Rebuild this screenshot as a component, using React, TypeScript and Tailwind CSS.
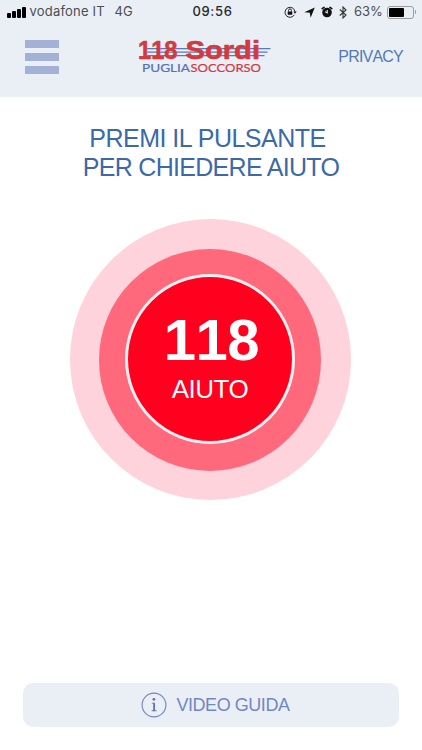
import { ReactNode } from 'react'

const SIGNAL_BARS = ['h-[5px]', 'h-[7px]', 'h-[9px]', 'h-[11px]']

function StatusBar() {
  return (
    <div className="flex h-6 items-center font-['Inter',sans-serif] text-[13px] text-[#4b4e54]">
      {/* carrier */}
      <div className="flex w-[141px] items-center pl-[7px]">
        <div className="flex h-[11px] items-end gap-[1.5px]">
          {SIGNAL_BARS.map((height) => (
            <span key={height} className={`w-[3.5px] rounded-[1px] bg-black ${height}`} />
          ))}
        </div>
        <span className="ml-1 w-[85px] whitespace-nowrap tracking-[0.2px]">vodafone IT</span>
        <span>4G</span>
      </div>

      <div className="flex-1 pl-[3px] text-center text-[13px] font-medium tracking-[0.7px] text-[#25272b]">09:56</div>

      {/* device state */}
      <div className="flex w-[141px] items-center justify-end pr-[6px]">
        <RotationLockIcon />
        <svg className="ml-[7px] h-[11px] w-[11px]" viewBox="0 0 11 11">
          <path d="M10.8 .4L6.6 10.8L5.8 5.8L.3 5.2Z" fill="#111" />
        </svg>
        <AlarmIcon />
        <svg className="ml-[6px] h-[13px] w-[8px]" viewBox="0 0 8 13">
          <path d="M.8 3.5L7 9L4 12V1L7 4L.8 9.5" fill="none" stroke="#333" strokeWidth="1.1" />
        </svg>
        <span className="ml-[7px] w-[30px] whitespace-nowrap">63%</span>
        <div className="ml-[3px] h-[13px] w-[27px] rounded-[3px] border border-[#9a9da3] p-[1px]">
          <div className="h-full w-[15px] rounded-[1px] bg-black" />
        </div>
        <span className="ml-[1px] h-1 w-[1px] rounded-r bg-[#9a9da3]" />
      </div>
    </div>
  )
}

function RotationLockIcon() {
  return (
    <svg className="h-[12px] w-[13px]" viewBox="0 0 13 12">
      <path d="M10.3 8.9A5 5 0 1 1 11 5.8" fill="none" stroke="#222" strokeWidth="1" />
      <path d="M9.2 5.4H12.8L11 7.8Z" fill="#222" />
      <rect x="3.7" y="5.4" width="4.6" height="3.4" rx=".4" fill="#111" />
      <path d="M4.6 5.6V4.3a1.4 1.4 0 0 1 2.8 0v1.3" fill="none" stroke="#111" strokeWidth=".9" />
    </svg>
  )
}

function AlarmIcon() {
  return (
    <svg className="ml-[6px] h-[12px] w-[12px]" viewBox="0 0 12 12">
      <path d="M1.2 2.6L3 1.4M10.8 2.6L9 1.4" stroke="#111" strokeWidth="1.7" strokeLinecap="round" />
      <circle cx="6" cy="6.5" r="4.8" fill="#111" />
      <path d="M6.2 4V6.9L4 5.6" fill="none" stroke="#eaeff6" strokeWidth="1.1" />
    </svg>
  )
}

function Logo() {
  return (
    <svg className="h-[40px] w-[136px] overflow-visible" viewBox="0 0 136 40" fontFamily="'Liberation Sans', Arial, sans-serif">
      {/* speed lines running behind the name */}
      <g stroke="#5a78c0" strokeWidth="1.3">
        <path d="M11 11.6H134.5" />
        <path d="M11 15.1H131.5" />
        <path d="M11 18.6H128.5" />
      </g>
      <g fill="#d23a40" stroke="#d23a40" strokeWidth=".6" fontWeight="700" fontSize="25.5">
        <text x="2" y="22.2" textLength="39.5" lengthAdjust="spacingAndGlyphs" className="[font-kerning:none]">118</text>
        <text x="49.5" y="22.2" textLength="74.5" lengthAdjust="spacingAndGlyphs">Sordi</text>
      </g>
      <g fontFamily="Lato, sans-serif" fontSize="11.5" strokeWidth=".2">
        <text x="6" y="35.2" fill="#5470bd" stroke="#5470bd" textLength="48" lengthAdjust="spacingAndGlyphs">PUGLIA</text>
        <text x="54.5" y="35.2" fill="#d23a40" stroke="#d23a40" textLength="70.5" lengthAdjust="spacingAndGlyphs">SOCCORSO</text>
      </g>
    </svg>
  )
}

function Ring({ className, children }: { className: string; children: ReactNode }) {
  return <div className={`flex items-center justify-center rounded-full ${className}`}>{children}</div>
}

export default function App() {
  return (
    <div className="flex h-[750px] w-[422px] flex-col overflow-hidden bg-white font-['Liberation_Sans',Arial,sans-serif]">
      <header className="h-[97px] bg-[#eaeff6]">
        <StatusBar />
        <div className="flex h-[66px] items-center pl-[25px] pr-[19px]">
          <button className="flex w-[34px] flex-col gap-[5px]" aria-label="Menu">
            <span className="h-2 w-full bg-[#a3b1d7]" />
            <span className="h-2 w-full bg-[#a3b1d7]" />
            <span className="h-2 w-full bg-[#a3b1d7]" />
          </button>
          <div className="ml-[77px]">
            <Logo />
          </div>
          <a className="ml-auto text-[16px] tracking-[-0.8px] text-[#5279b8] [font-kerning:none]">PRIVACY</a>
        </div>
      </header>

      <main className="flex flex-1 flex-col items-center">
        <h1 className="mt-[27px] whitespace-nowrap text-center text-[25px] leading-[29px] tracking-[-0.7px] text-[#3c69a8]">
          <span className="block pr-[7px] tracking-[-0.5px]">PREMI IL PULSANTE</span>
          PER CHIEDERE AIUTO
        </h1>

        <Ring className="mt-[37px] mr-[2px] size-[281px] bg-[#ffd3db]">
          <Ring className="size-[222px] bg-[#ff697b]">
            <button className="mb-[2px] flex size-[170px] flex-col items-center rounded-full border-[3px] border-[#fff0f2] bg-[#ff001e] text-white">
              <span className="mt-[30px] pl-[3px] text-[58px] leading-[66px] font-bold tracking-[-0.5px] [font-kerning:none]">118</span>
              <span className="text-[26px] leading-8 tracking-[-0.5px]">AIUTO</span>
            </button>
          </Ring>
        </Ring>

        <button className="mt-auto mb-[23px] flex h-[44px] w-[376px] items-center justify-center rounded-[10px] bg-[#eaeff6] pl-[9px] text-[#7187c3]">
          <svg className="mr-[9px] size-[26px]" viewBox="0 0 26 26">
            <circle cx="13" cy="13" r="11.9" fill="none" stroke="#7583c4" strokeWidth="1.1" />
            <circle cx="12.9" cy="7.3" r="1.4" fill="#6070b6" />
            <path d="M10.8 10.7H14V18.3H15.6V19.2H10.7V18.3H12.2V11.6H10.8Z" fill="#6070b6" />
          </svg>
          <span className="text-[18px] tracking-[-0.45px]">VIDEO GUIDA</span>
        </button>
      </main>
    </div>
  )
}
